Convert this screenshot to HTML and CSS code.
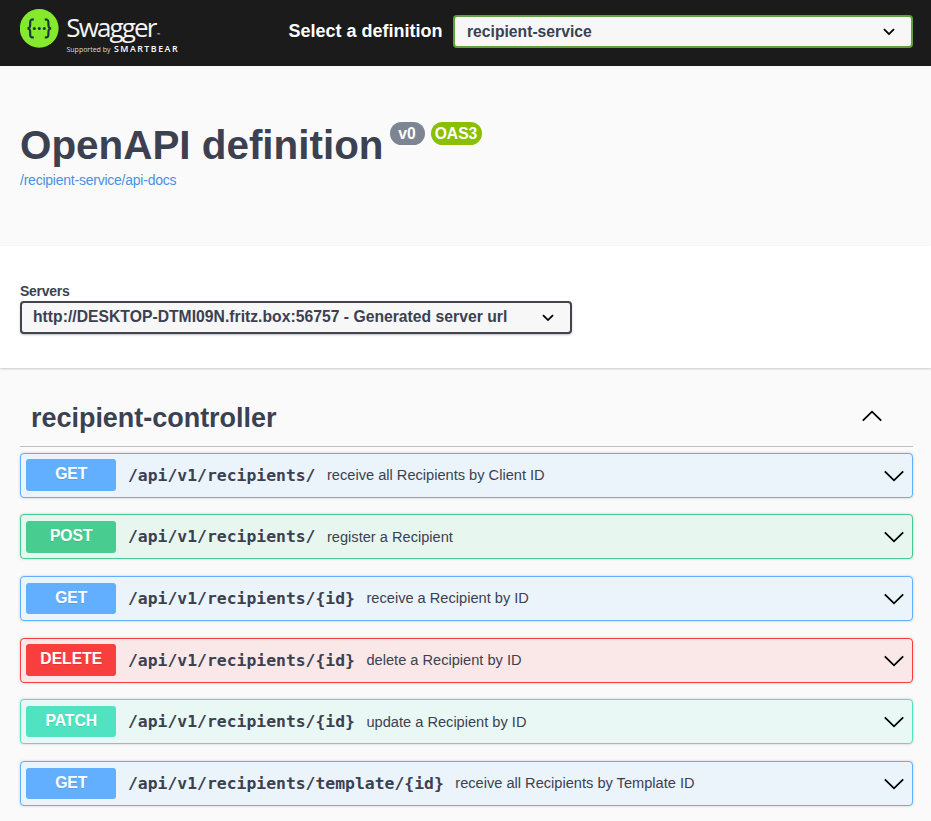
FILE: index.html
```html
<!DOCTYPE html>
<html lang="en">
<head>
<meta charset="utf-8">
<title>Swagger UI</title>
<link rel="stylesheet" href="styles.css">
</head>
<body>
<svg class="defs" aria-hidden="true">
  <symbol id="caret" viewBox="0 0 12 8"><path d="M1 1.2 6 6.1 11 1.2"/></symbol>
  <symbol id="chevron" viewBox="0 0 20 12"><path d="M.8 1.300 10 10.300 19.200 1.300"/></symbol>
</svg>
<header class="topbar">
  <svg class="logo" viewBox="0 0 160 46" role="img" aria-label="Swagger">
    <circle cx="19.2" cy="19.4" r="19.4" fill="#85ea2d"/>
    <g fill="none" stroke="#173647" stroke-width="2.200">
      <path d="M13.800 10.300c-2.900 0-3.600.7-3.600 2.800 0 3.900.3 6.300-2.800 6.300 3.100 0 2.800 2.400 2.800 6.300 0 2.100.7 2.800 3.600 2.800"/>
      <path d="M24.800 10.300c2.900 0 3.600.7 3.600 2.800 0 3.900-.3 6.300 2.800 6.300-3.100 0-2.800 2.400-2.800 6.300 0 2.100-.7 2.800-3.600 2.800"/>
    </g>
    <g fill="#173647"><circle cx="14.300" cy="19.400" r="1.500"/><circle cx="19.300" cy="19.400" r="1.500"/><circle cx="24.300" cy="19.400" r="1.500"/></g>
    <text class="logo-name" x="46.300" y="27.500" textLength="91">Swagger</text>
    <text class="logo-tm" x="137" y="27">™</text>
    <text class="logo-by" x="46.500" y="43" textLength="44">Supported by</text>
    <text class="logo-brand" x="94" y="43" textLength="63.500">SMARTBEAR</text>
  </svg>
  <span class="topbar-label">Select a definition</span>
  <div class="select select-definition"><span>recipient-service</span><svg class="caret"><use href="#caret"/></svg></div>
</header>
<section class="info">
  <h1 class="title">OpenAPI definition</h1>
  <span class="badge badge-version">v0</span>
  <span class="badge badge-oas">OAS3</span>
  <a class="docs-link">/recipient-service/api-docs</a>
</section>
<section class="servers">
  <span class="servers-label">Servers</span>
  <div class="select select-server"><span>http://DESKTOP-DTMI09N.fritz.box:56757 - Generated server url</span><svg class="caret"><use href="#caret"/></svg></div>
</section>
<main class="operations">
  <h2 class="tag"><span>recipient-controller</span><svg class="chevron chevron-up"><use href="#chevron"/></svg></h2>
  <div class="list">
    <div class="op get"><span class="method">GET</span><span class="path">/api/v1/recipients/</span><span class="summary">receive all Recipients by Client ID</span><svg class="chevron"><use href="#chevron"/></svg></div>
    <div class="op post"><span class="method">POST</span><span class="path">/api/v1/recipients/</span><span class="summary">register a Recipient</span><svg class="chevron"><use href="#chevron"/></svg></div>
    <div class="op get"><span class="method">GET</span><span class="path">/api/v1/recipients/{id}</span><span class="summary">receive a Recipient by ID</span><svg class="chevron"><use href="#chevron"/></svg></div>
    <div class="op delete"><span class="method">DELETE</span><span class="path">/api/v1/recipients/{id}</span><span class="summary">delete a Recipient by ID</span><svg class="chevron"><use href="#chevron"/></svg></div>
    <div class="op patch"><span class="method">PATCH</span><span class="path">/api/v1/recipients/{id}</span><span class="summary">update a Recipient by ID</span><svg class="chevron"><use href="#chevron"/></svg></div>
    <div class="op get"><span class="method">GET</span><span class="path">/api/v1/recipients/template/{id}</span><span class="summary">receive all Recipients by Template ID</span><svg class="chevron"><use href="#chevron"/></svg></div>
  </div>
</main>
</body>
</html>
```
FILE: styles.css
```css
* { box-sizing: border-box; }
body {
  margin: 0;
  height: 821px;
  overflow: hidden;
  background: #fafafa;
  color: #3b4151;
  font-family: "Liberation Sans", Arial, sans-serif;
  white-space: nowrap;
}
.defs { display: none; }
.topbar {
  display: flex;
  align-items: center;
  height: 66px;
  padding: 0 18px 0 20px;
  background: #1b1b1b;
}
.logo { width: 160px; height: 46px; margin-top: -2px; }
.logo text { font-family: "Open Sans", sans-serif; fill: #fff; }
.logo .logo-name { font-size: 26px; font-weight: 400; fill: #f4f4f4; }
.logo .logo-tm { font-size: 4px; }
.logo .logo-by { font-size: 7px; fill: #ddd; }
.logo .logo-brand { font-size: 8.8px; font-weight: 600; }
.topbar-label {
  margin-left: auto;
  margin-right: 10.5px;
  color: #fff;
  font-size: 18px;
  font-weight: 700;
  line-height: 20px;
  margin-top: -4px;
}
.select {
  display: flex;
  align-items: center;
  justify-content: space-between;
  height: 33px;
  border: 2px solid #41444e;
  border-radius: 4px;
  background: #f7f7f7;
  font-size: 15.7px;
  font-weight: 700;
}
.select-definition {
  width: 460px;
  margin-top: -3px;
  padding: 0 16.5px 0 12px;
  border-color: #62a03f;
}
.caret { width: 12px; height: 8px; fill: none; stroke: #000; stroke-width: 1.8; }
.info {
  display: flex;
  flex-wrap: wrap;
  align-content: flex-start;
  align-items: flex-start;
  height: 180px;
  padding: 56px 20px 0;
}
.title { margin: 0; font-size: 40.4px; line-height: 46px; }
.badge {
  height: 23px;
  border-radius: 12px;
  color: #fff;
  font-size: 15.7px;
  font-weight: 700;
  line-height: 23px;
  text-align: center;
}
.badge-version { width: 35px; margin-left: 6px; background: #7d8492; }
.badge-oas { width: 51px; margin-left: 6px; background: #89bf04; }
.docs-link {
  width: 100%;
  margin-top: 4px;
  color: #4990e2;
  font-size: 14px;
  letter-spacing: -.235px;
  line-height: 16px;
}
.servers {
  height: 122px;
  padding: 38px 20px 0;
  background: #fff;
  box-shadow: 0 1px 2px rgba(0, 0, 0, .2);
}
.servers-label {
  display: block;
  height: 17px;
  font-size: 14px;
  font-weight: 700;
  letter-spacing: -.28px;
  line-height: 15px;
}
.select-server { width: 552px; padding: 0 16.5px 2px 11px; box-shadow: 0 1px 2px rgba(0, 0, 0, .25); }
.select-server span { letter-spacing: .02px; }
.select-server .caret { margin-top: 3px; }
.operations { padding: 22px 18px 0 20px; }
.tag {
  display: flex;
  align-items: center;
  justify-content: space-between;
  height: 57px;
  margin: 0 0 5.7px;
  padding: 0 31px 0 11px;
  border-bottom: 1px solid #bfc0c3;
  font-size: 26.95px;
}
.chevron { width: 20px; height: 12px; fill: none; stroke: #000; stroke-width: 1.8; }
.chevron-up { margin-bottom: 4px; transform: rotate(180deg); }
.list { display: grid; gap: 16.8px; }
.op {
  display: flex;
  align-items: center;
  height: 44.87px;
  padding: 0 8px 0 5px;
  border: 1px solid;
  border-radius: 4px;
  box-shadow: 0 0 3px rgba(0, 0, 0, .19);
}
.method {
  width: 90px;
  height: 31.5px;
  padding-left: .5px;
  border-radius: 3px;
  color: #fff;
  font-size: 15.7px;
  font-weight: 700;
  line-height: 30.8px;
  text-align: center;
  text-shadow: 0 1px 0 rgba(0, 0, 0, .1);
}
.path {
  margin-left: 12px;
  font-family: "DejaVu Sans Mono", monospace;
  font-size: 16.4px;
  font-weight: 700;
}
.summary { margin-left: 11.5px; font-size: 14.62px; }
.op .chevron { margin-top: 1px; margin-left: auto; }
.get { border-color: #61affe; background: #ebf3fb; }
.get .method { background: #61affe; }
.post { border-color: #49cc90; background: #e8f6f0; }
.post .method { background: #49cc90; }
.delete { border-color: #f93e3e; background: #fae7e7; }
.delete .method { background: #f93e3e; }
.patch { border-color: #50e3c2; background: #e9f8f5; }
.patch .method { background: #50e3c2; }
```
